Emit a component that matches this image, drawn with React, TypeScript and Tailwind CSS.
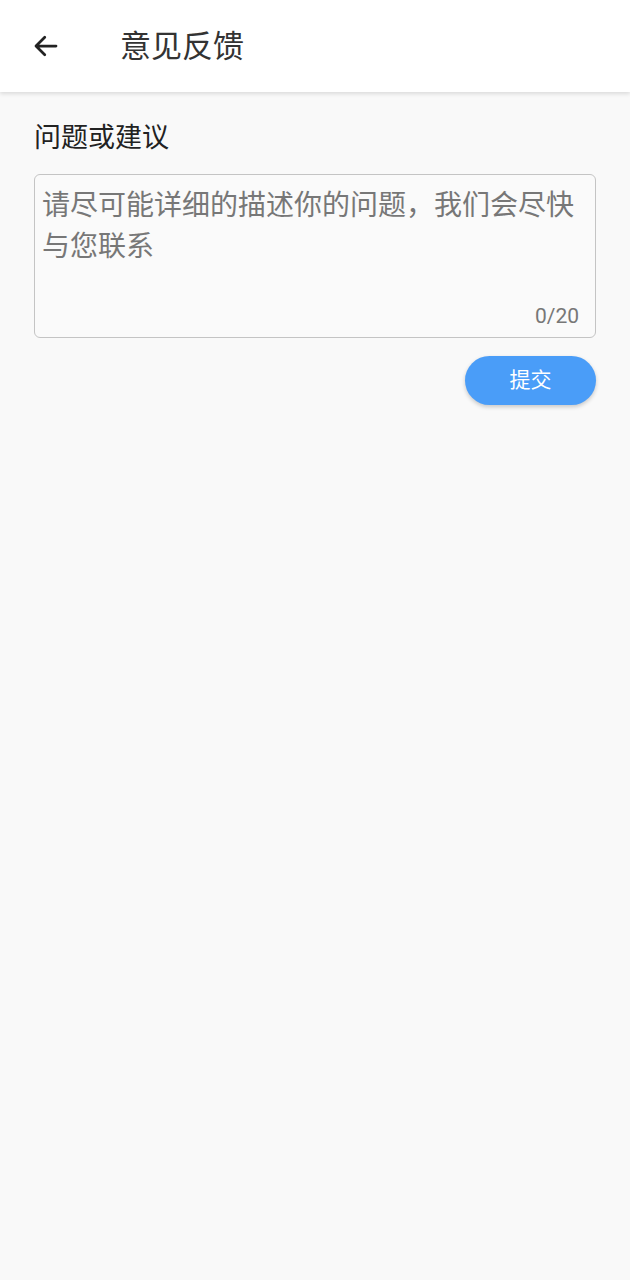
import { useState } from "react";

const font = { fontFamily: '"Roboto", "Noto Sans CJK SC", sans-serif' };

export default function App() {
  const [text, setText] = useState("");

  return (
    <div className="min-h-[1280px] bg-[#f9f9f9] flex flex-col" style={font}>
      {/* 顶部栏 */}
      <header className="h-[92px] bg-white flex items-center shadow-[0_2px_4px_rgba(0,0,0,0.12)] relative z-10">
        <button className="w-[92px] h-[92px] flex items-center justify-center">
          <svg width="30" height="30" viewBox="0 0 24 24" fill="none">
            <path d="M20 12H4.5M11 5l-7 7 7 7" stroke="#222" strokeWidth="2.2" strokeLinecap="round" strokeLinejoin="round" />
          </svg>
        </button>
        <h1 className="ml-[28px] text-[31px] text-[#333] leading-none">意见反馈</h1>
      </header>

      <main className="px-[34px] pt-[24px] flex flex-col">
        <p className="text-[27px] text-[#222] leading-[44px]">问题或建议</p>

        {/* 输入框 */}
        <div className="mt-[14px] h-[164px] border border-[#c4c4c4] rounded-[6px] bg-[#fafafa] relative">
          <textarea
            value={text}
            maxLength={20}
            onChange={(e) => setText(e.target.value)}
            placeholder="请尽可能详细的描述你的问题，我们会尽快与您联系"
            className="w-full h-full resize-none bg-transparent outline-none px-[7px] pt-[10px] text-[28px] leading-[41px] text-[#333] placeholder:text-[#777]"
          />
          <span className="absolute right-[16px] bottom-[5px] text-[21px] text-[#777]">{text.length}/20</span>
        </div>

        <div className="flex justify-end mt-[18px]">
          <button className="w-[131px] h-[49px] rounded-full bg-[#4a9df8] text-white text-[21px] shadow-[0_2px_4px_rgba(0,0,0,0.2)]">
            提交
          </button>
        </div>
      </main>
    </div>
  );
}
